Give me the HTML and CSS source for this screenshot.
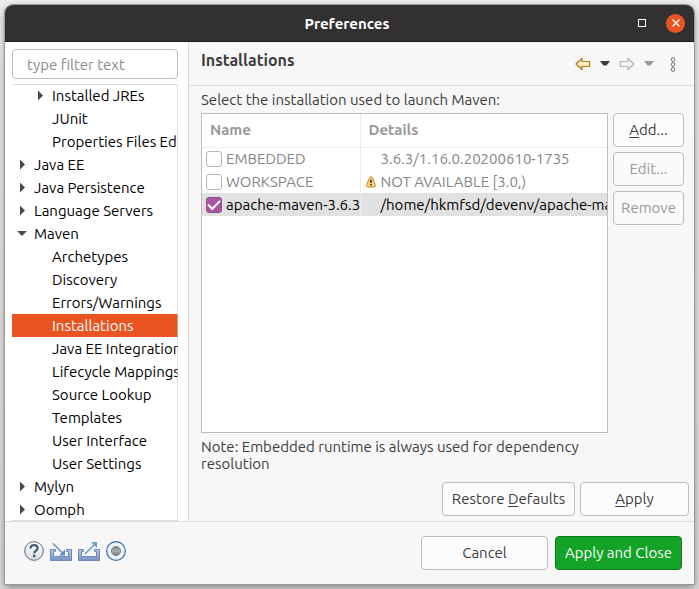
FILE: index.html
```html
<!DOCTYPE html>
<html lang="en">
<head>
<meta charset="utf-8">
<title>Preferences</title>
<link rel="stylesheet" href="styles.css">
</head>
<body>
<div class="window">
  <header class="titlebar">
    <h1>Preferences</h1>
    <div class="window-controls">
      <button class="maximize" aria-label="Maximize"><svg width="8" height="8"><rect x=".5" y=".5" width="7" height="7" fill="none" stroke="#fff"/></svg></button>
      <button class="close" aria-label="Close"><svg width="8" height="8"><path d="M.5.5l7 7M7.5.5l-7 7" stroke="#fff" stroke-width="1.3"/></svg></button>
    </div>
  </header>
  <div class="main">
    <nav class="sidebar">
      <input class="filter" type="text" placeholder="type filter text" aria-label="Filter">
      <ul class="tree" role="tree">
        <li class="child closed" role="treeitem">Installed JREs</li>
        <li class="child" role="treeitem">JUnit</li>
        <li class="child" role="treeitem">Properties Files Ed</li>
        <li class="closed" role="treeitem">Java EE</li>
        <li class="closed" role="treeitem">Java Persistence</li>
        <li class="closed" role="treeitem">Language Servers</li>
        <li class="opened" role="treeitem">Maven</li>
        <li class="child" role="treeitem">Archetypes</li>
        <li class="child" role="treeitem">Discovery</li>
        <li class="child" role="treeitem">Errors/Warnings</li>
        <li class="child selected" role="treeitem" aria-selected="true">Installations</li>
        <li class="child" role="treeitem">Java EE Integration</li>
        <li class="child" role="treeitem">Lifecycle Mappings</li>
        <li class="child" role="treeitem">Source Lookup</li>
        <li class="child" role="treeitem">Templates</li>
        <li class="child" role="treeitem">User Interface</li>
        <li class="child" role="treeitem">User Settings</li>
        <li class="closed" role="treeitem">Mylyn</li>
        <li class="closed" role="treeitem">Oomph</li>
      </ul>
    </nav>
    <main class="page">
      <div class="page-head">
        <h2>Installations</h2>
        <div class="history">
          <button aria-label="Back"><svg width="16" height="14"><defs><linearGradient id="gold" x2="0" y2="1"><stop offset="0" stop-color="#fffdf0"/><stop offset="1" stop-color="#ffe49a"/></linearGradient></defs><path d="M1 7l6-5.5V4.500h7.500v5H7v3z" fill="url(#gold)" stroke="#b87508" stroke-width="1.200" stroke-linejoin="round"/></svg></button>
          <button aria-label="Back history"><svg width="10" height="6"><path d="M0 0h10L6.500 4.500h-3z" fill="#3d3d3d"/></svg></button>
          <button class="forward" aria-label="Forward" disabled><svg width="16" height="14"><path d="M15 7L9 1.500V4.500H1.500v5H9v3z" fill="#f5f5f5" stroke="#b4b4b4" stroke-width="1.200" stroke-linejoin="round"/></svg></button>
          <button aria-label="Forward history" disabled><svg width="10" height="6"><path d="M0 0h10L6.500 4.500h-3z" fill="#999"/></svg></button>
          <button class="more" aria-label="View menu"><svg width="6" height="15" fill="#fff" stroke="#666"><circle cx="3" cy="2.500" r="1.800"/><circle cx="3" cy="7.500" r="1.800"/><circle cx="3" cy="12.500" r="1.800"/></svg></button>
        </div>
      </div>
      <div class="content">
        <p class="caption">Select the installation used to launch Maven:</p>
        <div class="columns">
          <div class="table-side">
            <div class="table-box">
              <table>
                <thead><tr><th class="name">Name</th><th>Details</th></tr></thead>
                <tbody>
                  <tr><td><label><input type="checkbox">EMBEDDED</label></td><td><span class="detail">3.6.3/1.16.0.20200610-1735</span></td></tr>
                  <tr><td><label><input type="checkbox">WORKSPACE</label></td><td><span class="detail"><svg class="warn" width="10" height="12"><path d="M5 .8c.8 0 1.200.6 1.500 1.200l2.700 6.500c.5 1.400.1 2.500-1.200 2.500H2C.7 11 .3 9.900.8 8.500L3.500 2C3.800 1.400 4.200.8 5 .8z" fill="#fbd37b" stroke="#c9862a"/><path d="M5 3.800v3M5 8v1.500" stroke="#3a2508" stroke-width="1.500"/></svg>NOT AVAILABLE [3.0,)</span></td></tr>
                  <tr class="current"><td><label><input type="checkbox" checked>apache-maven-3.6.3</label></td><td><span class="detail">/home/hkmfsd/devenv/apache-ma</span></td></tr>
                </tbody>
              </table>
            </div>
            <p class="note">Note: Embedded runtime is always used for dependency resolution</p>
          </div>
          <div class="actions">
            <button class="btn"><u>A</u>dd...</button>
            <button class="btn" disabled>Edit...</button>
            <button class="btn" disabled>Remove</button>
          </div>
        </div>
      </div>
      <div class="page-buttons">
        <button class="btn restore">Restore <u>D</u>efaults</button>
        <button class="btn apply"><u>A</u>pply</button>
      </div>
    </main>
  </div>
  <footer class="footer">
    <div class="tools">
      <button aria-label="Help"><svg width="20" height="20"><defs><linearGradient id="silver" x2="0" y2="1"><stop offset="0" stop-color="#fff"/><stop offset="1" stop-color="#dcdcdc"/></linearGradient></defs><circle cx="10" cy="10" r="9.300" fill="url(#silver)" stroke="#52688a"/><path d="M6.500 7.600C6.500 5.300 8 4.200 10 4.200s3.600 1.200 3.600 3.100c0 2.500-3.400 2.400-3.400 5" fill="none" stroke="#465d82" stroke-width="2.200"/><circle cx="10.200" cy="15" r="1.400" fill="#465d82"/></svg></button>
      <button aria-label="Import"><svg width="22" height="20"><defs><linearGradient id="tray" x2="0" y2="1"><stop offset="0" stop-color="#b9cae6"/><stop offset="1" stop-color="#7590c2"/></linearGradient></defs><path d="M.5 8.500h5v2h-2v5h15v-5h-2v-2h5v11H.5z" fill="url(#tray)" stroke="#6f8bbb"/><path d="M3 2.500l10 10" stroke="#5f9abb" stroke-width="1.500"/><path d="M15 14.500V8.500l-6 6z" fill="#5191b5"/></svg></button>
      <button aria-label="Export"><svg width="22" height="20"><path d="M.5 8.500h5v2h-2v5h15v-5h-2v-2h5v11H.5z" fill="url(#tray)" stroke="#6f8bbb"/><path d="M7 13l10-10" stroke="#5f9abb" stroke-width="1.500"/><path d="M19 1v6l-6-6z" fill="#6ba3c4"/></svg></button>
      <button aria-label="Record preferences"><svg width="20" height="20"><defs><linearGradient id="knob" x2="0" y2="1"><stop offset="0" stop-color="#777"/><stop offset=".5" stop-color="#b0b0b0"/><stop offset="1" stop-color="#777"/></linearGradient></defs><circle cx="10" cy="10" r="9.300" fill="#e9f4fc" stroke="#376da0" stroke-width="1.200"/><circle cx="10" cy="10" r="4.600" fill="url(#knob)" stroke="#888"/></svg></button>
    </div>
    <div class="footer-buttons">
      <button class="btn">Cancel</button>
      <button class="btn primary">Apply and Close</button>
    </div>
  </footer>
</div>
</body>
</html>
```
FILE: styles.css
```css
* { box-sizing: border-box; }
body {
  margin: 0;
  min-height: 100vh;
  padding: 5px;
  display: flex;
  background: linear-gradient(#eee, #dcdcdc);
  color: #3d3d3d;
  font: 15px/17px Ubuntu, "Noto Sans", "Open Sans", sans-serif;
}
h1, h2, p, ul { margin: 0; padding: 0; }
button, input { font: inherit; color: inherit; }
button { border: 0; padding: 0; background: none; }
svg { display: block; }

.window {
  flex: 1;
  min-width: 0;
  display: flex;
  flex-direction: column;
  background: #f7f7f7;
  border-radius: 8px 8px 0 0;
  box-shadow: 0 0 0 1px #999, 0 3px 9px rgba(0, 0, 0, .45);
}

.titlebar {
  height: 37px;
  display: grid;
  grid-template-columns: 1fr auto 1fr;
  align-items: center;
  background: #323030;
  border-bottom: 1px solid #1c1b1b;
  border-radius: 8px 8px 0 0;
  color: #fff;
}
.titlebar h1 { grid-column: 2; padding-right: 5px; font-size: 15px; }
.window-controls {
  display: flex;
  justify-content: flex-end;
  align-items: center;
  gap: 20px;
  padding-right: 9px;
}
.close {
  width: 19px;
  height: 19px;
  display: grid;
  place-items: center;
  border-radius: 50%;
  background: #e95420;
}

.main { flex: 1; display: flex; min-height: 0; }

.sidebar {
  width: 184px;
  flex: none;
  display: flex;
  flex-direction: column;
  gap: 5px;
  padding: 7px 10px 0 7px;
  background: #fff;
  border-right: 1px solid #dcdcdc;
}
.filter {
  width: 100%;
  height: 30px;
  padding: 0 14px;
  border: 1px solid #bdbdbd;
  border-radius: 4px;
  background: #fff;
}
.filter::placeholder { color: #8b8b8b; opacity: 1; }
.tree {
  flex: 1;
  position: relative;
  overflow: hidden;
  list-style: none;
  color: #000;
}
.tree::after {
  content: "";
  position: absolute;
  inset: 0;
  border: solid rgba(200, 200, 200, .6);
  border-width: 1px 1px 1px 0;
}
.tree li {
  display: flex;
  align-items: center;
  height: 23px;
  padding-left: 22px;
  white-space: nowrap;
}
.tree .child { padding-left: 40px; }
.tree .closed::before {
  content: "";
  width: 5px;
  height: 10px;
  margin: 0 9px 0 -14px;
  background: #4a4a4a;
  clip-path: polygon(0 0, 100% 50%, 0 100%);
}
.tree .opened::before {
  content: "";
  width: 10px;
  height: 5px;
  margin: 0 7px 0 -17px;
  background: #4a4a4a;
  clip-path: polygon(0 0, 100% 0, 50% 100%);
}
.tree .selected { background: #e95420; color: #fff; }

.page { flex: 1; min-width: 0; display: flex; flex-direction: column; }
.page-head {
  height: 44px;
  display: flex;
  justify-content: space-between;
  padding: 9px 18px 0 12px;
  border-bottom: 1px solid #dcdcdc;
}
.page-head h2 { font-size: 16px; line-height: 18px; }
.history { display: flex; align-items: center; gap: 9px; height: 26px; }
.history .more { margin-left: 7px; }

.content { flex: 1; display: flex; flex-direction: column; padding: 5px 10px 0 12px; }
.caption { height: 22px; line-height: 18px; }
.columns { flex: 1; display: flex; gap: 5px; }
.table-side { flex: 1; min-width: 0; display: flex; flex-direction: column; }
.table-box {
  flex: 1;
  overflow: hidden;
  background: #fff;
  border: 1px solid #bdbdbd;
}
table { width: 100%; table-layout: fixed; border-collapse: collapse; color: #858585; }
th {
  height: 33px;
  padding: 0 8px 2px;
  text-align: left;
  color: #999;
  border-bottom: 1px solid #efefef;
}
th.name { width: 158px; }
th.name, td:first-child { border-right: 1px solid #ececec; }
td { height: 23px; padding: 0 4px; overflow: hidden; white-space: nowrap; }
td label { display: flex; align-items: center; gap: 4px; }
input[type="checkbox"] {
  appearance: none;
  flex: none;
  width: 16px;
  height: 16px;
  margin: 0;
  border: 1px solid #b5b5b5;
  border-radius: 3px;
  background: #fff;
}
input[type="checkbox"]:checked {
  display: grid;
  place-items: center;
  border-color: #924d8b;
  background: #a9559f;
}
input[type="checkbox"]:checked::before {
  content: "";
  width: 10px;
  height: 5px;
  margin-bottom: 3px;
  border: solid #fff;
  border-width: 0 0 2px 2px;
  transform: rotate(-45deg);
}
.detail { position: relative; padding-left: 16px; }
.warn { position: absolute; left: 1px; top: 3px; }
.current { background: #e1e1e1; color: #000; }
.note { height: 44px; padding-top: 5px; }

.actions { width: 71px; display: flex; flex-direction: column; gap: 5px; }
.btn {
  height: 34px;
  padding-bottom: 2px;
  border: 1px solid #bdbdbd;
  border-radius: 4px;
  background: #fcfcfc;
  white-space: nowrap;
}
.btn:disabled { background: #fafafa; color: #989898; }
u { text-underline-offset: 2px; }
.page-buttons { display: flex; justify-content: flex-end; gap: 5px; padding: 5px; }
.restore { width: 133px; }
.apply { width: 109px; }

.footer {
  height: 63px;
  display: flex;
  justify-content: space-between;
  align-items: center;
  padding: 0 12px 0 19px;
  border-top: 1px solid #dcdcdc;
}
.tools { display: flex; align-items: center; gap: 6px; padding-bottom: 4px; }
.footer-buttons { display: flex; gap: 7px; }
.footer-buttons .btn { width: 127px; }
.footer-buttons .primary { background: #12a328; border-color: #0b7a1c; color: #fff; }
```
